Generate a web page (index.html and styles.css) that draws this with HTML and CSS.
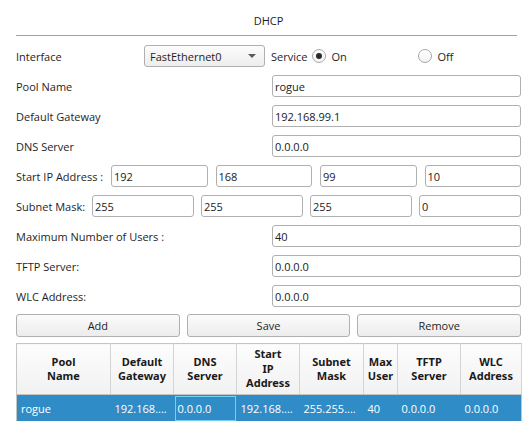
FILE: index.html
```html
<!DOCTYPE html>
<html>
<head>
<meta charset="utf-8">
<link rel="stylesheet" href="styles.css">
</head>
<body>
<div class="dialog">
  <div class="title">DHCP</div>
  <div class="form">
    <div class="row">
      <span class="label lbl-iface">Interface</span>
      <div class="combo"><span>FastEthernet0</span><span class="arrow"></span></div>
      <span class="service">Service</span>
      <label class="radio radio-on"><span class="dot checked"></span>On</label>
      <label class="radio"><span class="dot"></span>Off</label>
    </div>
    <div class="row"><span class="label grow">Pool Name</span><input class="field wide" value="rogue"></div>
    <div class="row"><span class="label grow">Default Gateway</span><input class="field wide" value="192.168.99.1"></div>
    <div class="row"><span class="label grow">DNS Server</span><input class="field wide" value="0.0.0.0"></div>
    <div class="row quad">
      <span class="label lbl-start">Start IP Address :</span>
      <input class="field part" value="192"><input class="field part" value="168"><input class="field part" value="99"><input class="field part" value="10">
    </div>
    <div class="row quad mask">
      <span class="label lbl-mask">Subnet Mask:</span>
      <input class="field part" value="255"><input class="field part" value="255"><input class="field part" value="255"><input class="field part" value="0">
    </div>
    <div class="row"><span class="label grow">Maximum Number of Users :</span><input class="field wide" value="40"></div>
    <div class="row"><span class="label grow">TFTP Server:</span><input class="field wide" value="0.0.0.0"></div>
    <div class="row"><span class="label grow">WLC Address:</span><input class="field wide" value="0.0.0.0"></div>
  </div>
  <div class="buttons">
    <button class="btn">Add</button>
    <button class="btn">Save</button>
    <button class="btn">Remove</button>
  </div>
  <table class="pools">
    <colgroup>
      <col class="c94"><col class="c63"><col class="c63"><col class="c63"><col class="c64"><col class="c34"><col class="c63"><col class="c61">
    </colgroup>
    <thead>
      <tr>
        <th>Pool<br>Name</th>
        <th>Default<br>Gateway</th>
        <th>DNS<br>Server</th>
        <th>Start<br>IP<br>Address</th>
        <th>Subnet<br>Mask</th>
        <th>Max<br>User</th>
        <th>TFTP<br>Server</th>
        <th>WLC<br>Address</th>
      </tr>
    </thead>
    <tbody>
      <tr class="selected">
        <td>rogue</td>
        <td>192.168....</td>
        <td class="focus">0.0.0.0</td>
        <td>192.168....</td>
        <td>255.255....</td>
        <td>40</td>
        <td>0.0.0.0</td>
        <td>0.0.0.0</td>
      </tr>
    </tbody>
  </table>
</div>
</body>
</html>
```

FILE: styles.css
```css
* { box-sizing: border-box; }
html, body { margin: 0; background: #fff; }
body {
  font-family: "Open Sans", "Noto Sans", sans-serif;
  font-size: 11px;
  color: #1e1e1e;
  overflow: hidden;
}
.dialog { padding: 0 5px 0 16px; }
.title {
  height: 36px;
  padding-top: 6px;
  display: flex;
  align-items: center;
  justify-content: center;
  border-bottom: 1px solid #a0a0a0;
  margin-right: 4px;
  padding-left: 4px;
}
.form {
  margin-top: 9px;
  display: flex;
  flex-direction: column;
  gap: 8px;
}
.row {
  display: flex;
  align-items: center;
  height: 22px;
}
.label { white-space: nowrap; }
.grow { flex: 1; }
.lbl-iface { width: 128px; }
.lbl-start { width: 95px; }
.lbl-mask { width: 76px; }
.quad { gap: 8px; }
.quad .label { margin-right: -8px; }
.mask { gap: 7px; }
.mask .label { margin-right: -7px; }
.field {
  height: 22px;
  border: 1px solid #b0b0b0;
  border-radius: 3px;
  padding: 0 2px;
  font: inherit;
  color: #1a1a1a;
  background: #fff;
  outline: none;
  margin: 0;
}
.wide { width: 249px; }
.part { flex: 1; min-width: 0; }
.combo {
  width: 121px;
  height: 22px;
  border: 1px solid #b0b0b0;
  border-radius: 3px;
  background: linear-gradient(#fcfcfc, #ededed);
  display: flex;
  align-items: center;
  justify-content: space-between;
  padding: 0 8px 0 5px;
}
.arrow {
  width: 0;
  height: 0;
  border-left: 4px solid transparent;
  border-right: 4px solid transparent;
  border-top: 4px solid #5a5a5a;
}
.service { margin-left: 6px; margin-right: 5px; }
.radio {
  display: flex;
  align-items: center;
  gap: 5px;
}
.radio-on { width: 106px; }
.dot {
  width: 14px;
  height: 14px;
  border-radius: 50%;
  border: 1px solid #a8a8a8;
  background: linear-gradient(#ffffff, #f2f2f2);
  display: inline-flex;
  align-items: center;
  justify-content: center;
}
.dot.checked::after {
  content: "";
  width: 6px;
  height: 6px;
  border-radius: 50%;
  background: #2b2b2b;
}
.buttons {
  margin-top: 7px;
  display: flex;
  gap: 7px;
}
.btn {
  flex: 1;
  height: 23px;
  font: inherit;
  color: #1f1f1f;
  border: 1px solid #b0b0b0;
  border-radius: 3px;
  background: linear-gradient(#fbfbfb, #ececec);
  padding: 0;
}
.pools {
  margin-top: 6px;
  width: 505px;
  border-collapse: collapse;
  table-layout: fixed;
  border: 1px solid #c4c4c4;
}
.c94 { width: 94px; }
.c63 { width: 63px; }
.c64 { width: 64px; }
.c34 { width: 34px; }
.c61 { width: 61px; }
.pools th {
  height: 51px;
  padding: 0 1px;
  font-family: "Noto Sans", "Open Sans", sans-serif;
  font-weight: 700;
  line-height: 14.5px;
  text-align: center;
  color: #1a1a1a;
  background: linear-gradient(#fdfdfd, #f1f1f1);
  border-right: 1px solid #d4d4d4;
  border-bottom: 1px solid #c4c4c4;
}
.pools td {
  height: 27px;
  padding: 0 4px;
  color: #fff;
  white-space: nowrap;
  overflow: hidden;
}
.selected { background: #308cc6; }
.pools td.focus { outline: 1px solid #6fd2f4; outline-offset: -2px; }
```
